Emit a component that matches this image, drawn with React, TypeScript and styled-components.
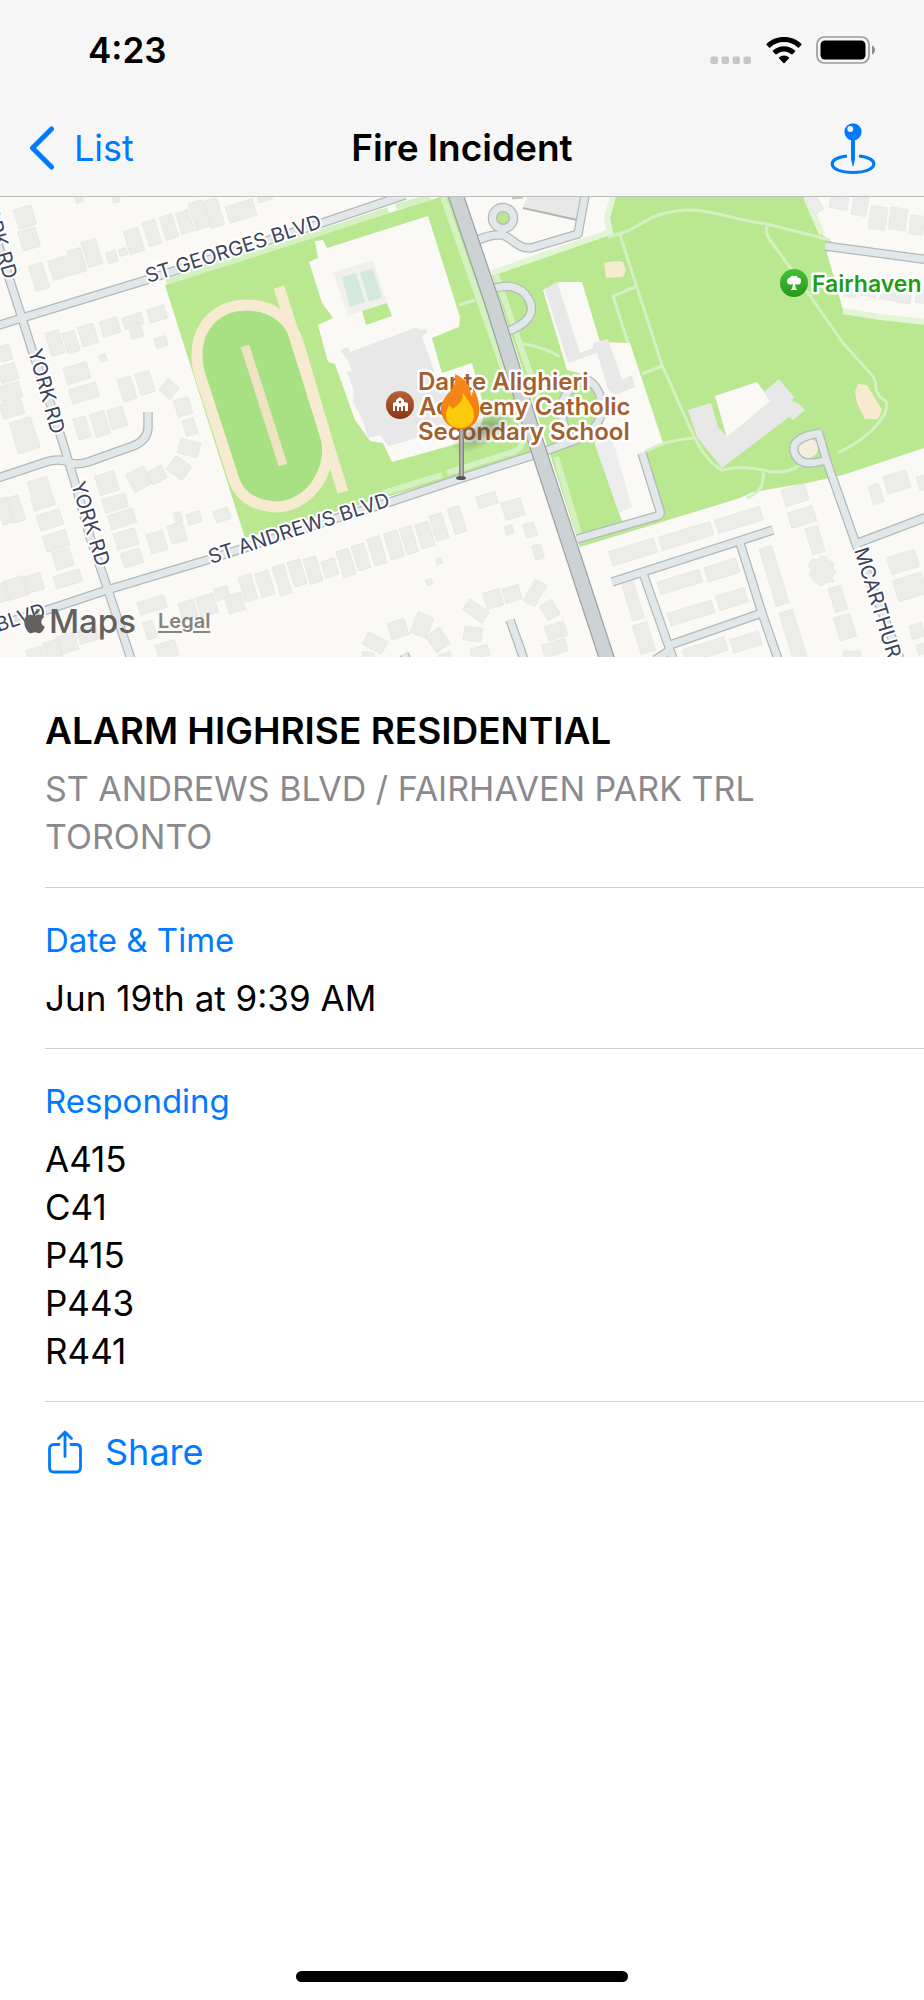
import React from 'react';
import styled, { createGlobalStyle } from 'styled-components';
import { FaApple } from 'react-icons/fa';

const GlobalStyle = createGlobalStyle`
  * { box-sizing: border-box; }
  body {
    margin: 0;
    background: #fff;
    color: #000;
    font-family: Inter, "Liberation Sans", sans-serif;
  }
`;

const BLUE = '#007aff';

const Screen = styled.div`
  display: flex;
  flex-direction: column;
  min-height: 100vh;
`;

const Header = styled.header`
  background: #f6f6f6;
  border-bottom: 1px solid #bcbebb;
`;

const StatusBar = styled.div`
  display: flex;
  align-items: center;
  justify-content: space-between;
  height: 100px;
  padding: 0 48px 0 88px;
`;

const Clock = styled.time`
  font-size: 35px;
  line-height: 48px;
  font-weight: 600;
`;

const StatusIcons = styled.div`
  display: flex;
  align-items: center;
  gap: 14px;
`;

const NavBar = styled.nav`
  display: grid;
  grid-template-columns: 1fr auto 1fr;
  align-items: center;
  height: 96px;
  padding: 0 28px;
`;

const BackButton = styled.button`
  display: flex;
  align-items: center;
  gap: 18px;
  justify-self: start;
  padding: 0;
  border: 0;
  background: none;
  color: ${BLUE};
  font: inherit;
  font-size: 36px;
  line-height: 48px;
`;

const PageTitle = styled.h1`
  margin: 0;
  font-size: 37px;
  line-height: 48px;
  font-weight: 600;
`;

const IconButton = styled.button`
  display: flex;
  justify-self: end;
  padding: 2px 20px 0 0;
  border: 0;
  background: none;
  color: ${BLUE};
`;

const MapPanel = styled.section`
  position: relative;
  overflow: hidden;
  background: #faf9f5;
`;

const MapCanvas = styled.svg`
  display: block;
  width: 100%;
  height: auto;
  font-family: Inter, "Liberation Sans", sans-serif;
`;

const Attribution = styled.div`
  position: absolute;
  left: 21px;
  bottom: 16px;
  display: flex;
  align-items: center;
  gap: 22px;
`;

const MapBrand = styled.span`
  display: flex;
  align-items: center;
  gap: 1px;
  color: #62615f;
  font-size: 33px;
  line-height: 40px;
  font-weight: 500;
`;

const AppleMark = styled(FaApple)`
  width: 27px;
  height: 28px;
`;

const LegalLink = styled.a`
  color: #858481;
  font-size: 20px;
  line-height: 24px;
  font-weight: 600;
  text-decoration: underline;
  text-underline-offset: 3px;
`;

const Details = styled.main`
  flex: 1;
  padding: 22px 0 0 45px;
`;

const Section = styled.section`
  display: flex;
  flex-direction: column;
  gap: 10px;
  padding: 28px 45px 26px 0;
  border-bottom: 1px solid #d0d0d2;
`;

const IncidentType = styled.h2`
  margin: 0;
  font-size: 37px;
  line-height: 48px;
  font-weight: 600;
`;

const Address = styled.address`
  color: #8a8a8e;
  font-size: 34px;
  line-height: 48px;
  font-style: normal;
`;

const SectionTitle = styled.h3`
  margin: 0;
  color: ${BLUE};
  font-size: 33px;
  line-height: 48px;
  font-weight: 400;
`;

const Value = styled.p`
  margin: 0;
  font-size: 35px;
  line-height: 48px;
`;

const UnitList = styled.ul`
  margin: 0;
  padding: 0;
  list-style: none;
  font-size: 35px;
  line-height: 48px;
`;

const ShareButton = styled.button`
  display: flex;
  align-items: center;
  gap: 23px;
  margin-top: 26px;
  padding: 0 0 0 3px;
  border: 0;
  background: none;
  color: ${BLUE};
  font: inherit;
  font-size: 36px;
  line-height: 48px;
`;

const HomeArea = styled.footer`
  display: flex;
  justify-content: center;
  padding: 16px 0 18px;
`;

const HomeIndicator = styled.div`
  width: 36%;
  height: 11px;
  border-radius: 6px;
  background: #000;
`;

const PAPER = '#faf9f5';
const GREEN = '#b9e890';
const FIELD = '#a8e184';
const SAND = '#f6ebd0';
const TRAIL = '#d6f1c1';
const BUILDING = '#e8e8e8';

type House = [cx: number, cy: number, w: number, h: number, angle?: number];

const houses: House[] = [
  [25, 217, 18, 20], [29, 239, 18, 20], [39, 277, 14, 26], [60, 268, 20, 20], [77, 261, 14, 24],
  [92, 253, 15, 26], [112, 257, 10, 11], [123, 252, 8, 7], [134, 241, 15, 24], [152, 233, 13, 25],
  [169, 227, 13, 24], [185, 222, 13, 22], [199, 215, 14, 28], [214, 213, 14, 28], [241, 211, 28, 17],
  [79, 199, 7, 7], [116, 199, 7, 7], [265, 198, 14, 6],
  [55, 343, 14, 24], [71, 342, 13, 21], [88, 335, 16, 20], [110, 327, 18, 16], [133, 321, 20, 12],
  [136, 331, 12, 14], [157, 314, 18, 14], [161, 342, 12, 10], [103, 358, 7, 7], [77, 373, 24, 17],
  [84, 393, 28, 15], [127, 389, 14, 23], [145, 383, 15, 22], [169, 389, 15, 15, 40], [183, 407, 15, 17],
  [5, 353, 12, 16], [8, 373, 18, 17], [10, 392, 22, 16], [12, 409, 22, 15], [22, 427, 22, 15],
  [82, 428, 13, 22], [100, 424, 15, 24], [117, 418, 16, 20], [190, 427, 12, 16],
  [27, 443, 23, 16], [39, 486, 20, 14], [43, 501, 22, 14], [50, 520, 24, 16], [5, 511, 12, 26],
  [16, 509, 12, 26], [56, 541, 24, 17], [63, 559, 18, 18], [68, 579, 27, 13], [16, 588, 20, 20],
  [34, 583, 17, 17], [1, 593, 12, 18], [107, 483, 20, 20], [115, 503, 24, 14], [122, 519, 26, 15],
  [126, 539, 22, 17], [132, 558, 20, 15], [139, 479, 20, 20, -28], [157, 475, 16, 14, -28],
  [179, 468, 20, 17, 35], [189, 448, 21, 15, 15], [157, 542, 17, 20], [177, 533, 16, 19],
  [178, 517, 7, 10], [194, 518, 14, 11], [222, 515, 15, 12], [152, 605, 28, 13], [188, 610, 16, 18],
  [207, 605, 18, 20], [222, 593, 14, 12], [235, 603, 17, 18], [248, 588, 13, 26], [265, 584, 14, 25],
  [282, 580, 12, 30], [297, 573, 13, 26], [167, 650, 20, 16], [150, 630, 10, 18], [68, 643, 18, 18],
  [52, 650, 16, 18], [35, 655, 16, 14], [88, 635, 20, 14],
  [313, 570, 13, 26], [330, 568, 14, 17], [346, 563, 13, 27], [361, 557, 13, 26], [377, 551, 13, 28],
  [394, 545, 14, 27], [409, 540, 12, 27], [425, 535, 14, 25], [439, 527, 13, 26], [457, 520, 12, 27],
  [487, 500, 20, 12], [513, 509, 20, 18], [509, 530, 8, 9], [530, 530, 11, 14], [538, 552, 9, 15],
  [439, 561, 6, 6], [429, 582, 6, 6], [375, 643, 22, 14, 28], [398, 629, 18, 17], [422, 625, 17, 22, 22],
  [438, 640, 17, 20, -35], [476, 611, 24, 13, 35], [493, 599, 17, 17], [512, 594, 17, 15],
  [535, 593, 13, 25, 30], [550, 610, 14, 17, -30], [556, 631, 20, 15], [555, 648, 24, 13],
  [473, 634, 18, 14, 8], [480, 652, 18, 11], [368, 655, 12, 6, 5], [445, 656, 12, 6],
  [815, 205, 12, 16, -30], [839, 203, 18, 12, 10], [860, 206, 15, 19, 10], [878, 218, 17, 23, 8],
  [898, 219, 17, 22, 8], [917, 225, 14, 19, 8], [850, 292, 12, 10, 8], [867, 288, 20, 16, 8],
  [888, 290, 14, 20, 8], [903, 296, 16, 14, 8], [921, 296, 10, 14, 8],
  [633, 552, 47, 15], [686, 536, 54, 14], [739, 520, 47, 14], [795, 495, 24, 17], [802, 517, 26, 16],
  [815, 540, 13, 27], [838, 599, 13, 25], [845, 627, 17, 24], [852, 655, 18, 8, 0], [876, 494, 11, 19],
  [897, 482, 24, 18], [922, 483, 8, 14], [903, 562, 29, 18], [910, 587, 30, 22], [917, 631, 13, 14],
  [922, 649, 10, 10], [680, 582, 44, 13], [722, 570, 33, 15], [691, 613, 46, 13], [732, 599, 30, 15],
  [633, 601, 12, 38], [644, 638, 15, 30], [774, 576, 13, 60], [793, 635, 14, 50], [705, 650, 44, 14],
  [746, 642, 30, 14],
];

const streets = [
  'M-10 328L22 318L143 281L322 223L405 195',
  'M-8 225L0 250L22 318L32 350L50 403L62 440L75 483L90 537L107 587L132 662',
  'M-5 479L43 463Q60 457 70 463Q78 465 88 462L133 446Q149 440 148 424L148 412',
  'M-10 628L47 610L107 590L207 560L337 518L390 502L462 478L540 453L573 441',
  'M476 241Q490 234 502 235C512 237 517 249 531 248L578 234L586 190',
  'M501 234L502 226',
  'M492 289Q505 285 513 287C526 290 533 303 531 312C528 323 517 327 507 332',
  'M573 441Q600 432 602 408Q601 388 588 380M573 441Q560 425 562 405Q565 390 578 386',
  'M577 539L657 516Q661 515 660 511L642 453',
  'M612 582L773 530',
  'M643 573L670 650L674 662',
  'M740 543L762 613L779 662',
  'M670 645L762 613M670 650L655 660',
  'M818 431L827 462L857 547L902 664',
  'M858 543L924 518L940 513',
  'M820 433C800 436 792 443 794 451C797 463 806 466 827 460',
  'M825 246L930 260',
  'M510 620L525 662',
  'M404 654L410 666',
];

const trails = [
  'M608 237L622 233C640 228 650 210 693 210C715 211 740 221 767 224L830 240',
  'M620 235L662 365L690 428Q705 462 722 470Q745 464 770 472Q790 473 800 465',
  'M763 472Q766 490 747 498',
  'M768 224Q764 232 770 240L792 270L843 343L870 373Q877 380 876 390Q880 399 886 401C890 412 875 435 838 453',
  'M635 287L613 296L628 343',
  'M662 366L642 374',
  'M645 452Q665 440 693 438',
  'M519 343Q545 347 560 357',
  'M459 305L475 300',
];

const StatusGlyphs = () => (
  <StatusIcons role="img" aria-label="No cellular signal, Wi-Fi on, battery full">
    <svg width="42" height="27" viewBox="0 0 42 27">
      {[0, 11, 22, 33].map((x) => (
        <rect key={x} x={x + 0.5} y="19.5" width="7.5" height="7.5" rx="2" fill="#c6c6c6" />
      ))}
    </svg>
    <svg width="36" height="27" viewBox="0 0 36 27">
      <path fill="#000" d="M18 0C24.900 0 31 2.600 35.300 6.700Q36 7.400 35.300 8.100L33 10.400Q32.400 11 31.700 10.400C28.200 7 23.400 5.100 18 5.100S7.800 7 4.300 10.400Q3.600 11 3 10.400L.7 8.100Q0 7.400.7 6.700C5 2.600 11.100 0 18 0Z" />
      <path fill="#000" d="M18 9.300C22.300 9.300 26.100 10.900 29 13.500Q29.600 14.100 29 14.800L26.500 17.300Q25.900 17.800 25.300 17.300C23.300 15.500 20.800 14.400 18 14.400S12.700 15.500 10.700 17.300Q10.100 17.800 9.500 17.300L7 14.800Q6.400 14.100 7 13.500C9.900 10.900 13.700 9.300 18 9.300Z" />
      <path fill="#000" d="M18 18.500Q20.800 18.500 22.800 20.200Q23.400 20.800 22.800 21.400L18.600 25.900Q18 26.500 17.400 25.900L13.200 21.400Q12.600 20.800 13.200 20.200Q15.200 18.500 18 18.500Z" />
    </svg>
    <svg width="60" height="28" viewBox="0 0 60 28">
      <rect x="1" y="1" width="52" height="26" rx="7.500" fill="none" stroke="#9b9b9b" strokeWidth="1.700" />
      <rect x="4.500" y="4.500" width="45" height="19" rx="4.500" fill="#000" />
      <path d="M56 9.500Q59 11 59 14T56 18.500Z" fill="#8c8c8c" />
    </svg>
  </StatusIcons>
);

const PinGlyph = () => (
  <svg width="46" height="52" viewBox="0 0 46 52" aria-hidden="true">
    <path d="M17 33C8 34 2.200 37 2.200 41C2.200 46 11 49.500 23 49.500S43.800 46 43.800 41C43.800 37 38 34 29 33" fill="none" stroke="currentColor" strokeWidth="3.200" />
    <path d="M21 15h4v21L23.500 43h-1L21 36Z" fill="currentColor" />
    <circle cx="23" cy="8.800" r="8.600" fill="currentColor" />
    <circle cx="20.300" cy="6" r="2.900" fill="#f6f6f6" />
  </svg>
);

const ShareGlyph = () => (
  <svg width="34" height="44" viewBox="0 0 34 44" fill="none" stroke="currentColor" strokeWidth="2.800" strokeLinecap="round" strokeLinejoin="round" aria-hidden="true">
    <path d="M11 14.500H6Q1.500 14.500 1.500 19V37.500Q1.500 42 6 42H28Q32.500 42 32.500 37.500V19Q32.500 14.500 28 14.500H23" />
    <path d="M17 26.500V2.500M10.500 8.500L17 2L23.500 8.500" />
  </svg>
);

const StreetLabel = ({ id, d, children }: { id: string; d: string; children: string }) => (
  <>
    <path id={id} d={d} fill="none" />
    <text fontSize="20" fontWeight="400" fill="#3c4259" stroke="#fff" strokeWidth="4" strokeLinejoin="round" paintOrder="stroke">
      <textPath href={`#${id}`}>{children}</textPath>
    </text>
  </>
);

const IncidentMap = () => (
  <MapCanvas viewBox="0 197 924 460" role="img" aria-label="Map of St Andrews Blvd with a fire marker">
    <defs>
      <linearGradient id="school" x1="0" y1="0" x2="0" y2="1">
        <stop offset="0" stopColor="#b5633a" />
        <stop offset="1" stopColor="#8c3518" />
      </linearGradient>
      <linearGradient id="park" x1="0" y1="0" x2="0" y2="1">
        <stop offset="0" stopColor="#46bf38" />
        <stop offset="1" stopColor="#26991c" />
      </linearGradient>
      <linearGradient id="flame" x1="0" y1="0" x2="0" y2="1">
        <stop offset="0" stopColor="#f58a1c" />
        <stop offset="1" stopColor="#f57c0c" />
      </linearGradient>
      <linearGradient id="stem" x1="0" y1="0" x2="1" y2="0">
        <stop offset="0" stopColor="#777" />
        <stop offset="0.500" stopColor="#bdbdbd" />
        <stop offset="1" stopColor="#777" />
      </linearGradient>
      <radialGradient id="shade">
        <stop offset="0" stopColor="#3b4a2c" stopOpacity="0.500" />
        <stop offset="1" stopColor="#3b4a2c" stopOpacity="0" />
      </radialGradient>
    </defs>
    <rect x="0" y="197" width="924" height="460" fill={PAPER} />

    <g fill={GREEN}>
      <path d="M165 285L310 238L440 197H456L541 452L245 538Z" />
      <path d="M492 275L610 233L608 220L615 197H805L820 233L832 242L827 253L843 310L924 322V448L843 475L807 483L753 492L740 498L580 547Z" />
      <circle cx="503" cy="218" r="9" />
    </g>
    <g fill="none" stroke="#e3f5d6" strokeWidth="6">
      <path d="M492 273L610 232L607 218L613 197" />
      <path d="M843 311L880 317L926 322M806 197L822 234" />
    </g>
    <g fill="none" stroke={TRAIL} strokeWidth="6">
      <path d="M166 282L310 236L388 210M396 207L430 197" />
      <path d="M443 197L509 385M383 493L442 475M447 473L513 452Q524 448 523 437L519 410" />
      <path d="M496 275L541 405M556 457L580 537" />
    </g>

    <path d="M197 355C197 325 218 305 247 305C275 305 291 322 298 342L326 437C334 470 310 506 277 507C255 506 240 497 234 480L201 378Q197 368 197 355Z" fill={FIELD} stroke={SAND} strokeWidth="11" />
    <path d="M279 287L343 492" stroke={SAND} strokeWidth="11" />
    <path d="M245 346L283 465" stroke="#efe3c4" strokeWidth="9" />

    <path fill={PAPER} d="M315 241L323 240L327 248L428 216L460 317L459 327L432 338L442 373L472 363L485 410L478 438L392 462L383 443L370 441L355 420L335 364L328 362L318 325L333 318L322 303L309 262L318 258Z" />
    <path fill={BUILDING} d="M340 350L348 347L350 352L417 327L420 330L427 329L427 333L422 336L441 392L472 384L482 416L400 443L388 446L380 435L368 438L363 421L353 402L354 390L347 372L352 371L348 360Z" />
    <path fill="#f1f1ec" d="M333 272L373 260L387 303L348 316Z" />
    <path fill="#d3e9dd" d="M342 277L356 273L365 302L350 307ZM360 272L373 269L382 297L369 302Z" />
    <path fill={GREEN} d="M362 311L387 303L392 316L366 325Z" />

    <path fill={PAPER} d="M543 290L560 282H582L600 342L630 343L663 443L645 453L660 515L622 521L595 444L604 412L590 376L567 370Z" />
    <path fill={BUILDING} d="M545 290L557 281L580 353L593 348V343L608 339L622 380L632 375L635 387L615 395L608 390L597 353L568 363Z" />
    <path fill="#eeedee" d="M595 445L612 438L632 507L619 513Z" />
    <path fill={PAPER} d="M715 396L757 382L771 401L727 438Z" />
    <path fill={BUILDING} d="M688 410L711 403L718 427L727 437L770 401L764 392L779 379L794 397L792 401L798 403L805 410L793 420L789 417L722 468L697 437Z" />
    <path fill={BUILDING} d="M527 197L523 207L577 220L583 197Z" />
    <path d="M523 208L577 220" stroke="#b4b4b4" strokeWidth="2" />
    <path d="M512 198L523 197" stroke="#c5c5c5" strokeWidth="3" />

    <g fill="#ececeb" stroke="#e0e0df" strokeWidth="0.500">
      {houses.map(([cx, cy, w, h, angle = -17]) => (
        <rect key={`${cx}-${cy}`} x={cx - w / 2} y={cy - h / 2} width={w} height={h} transform={`rotate(${angle} ${cx} ${cy})`} />
      ))}
      <path d="M812 559L818 560L821 556L827 557L829 561L834 563L833 568L836 573L832 577L834 582L827 582L822 586L817 584L812 579L809 574L812 570L808 566Z" />
    </g>

    <g fill={SAND}>
      <path d="M604 263Q614 260 623 262L626 270L623 277L606 278Z" />
      <path d="M858 384L867 385L882 410L878 419L865 419L857 403L855 392Z" />
    </g>
    <circle cx="808" cy="448" r="10" fill="#f5eee0" />
    <g fill="none" stroke={TRAIL} strokeWidth="3">
      {trails.map((d) => <path key={d} d={d} />)}
    </g>

    <g fill="none" stroke="#b3b9ba" strokeWidth="9.500" strokeLinejoin="round">
      {streets.map((d) => <path key={d} d={d} />)}
      <circle cx="503" cy="218" r="10.500" />
    </g>
    <g fill="none" stroke="#e2e8e9" strokeWidth="7" strokeLinejoin="round">
      {streets.map((d) => <path key={d} d={d} />)}
      <circle cx="503" cy="218" r="10.500" />
    </g>
    <path d="M454 190L492 302L530 424L608 662" fill="none" stroke="#9ca2a3" strokeWidth="16" />
    <path d="M454 190L492 302L530 424L608 662" fill="none" stroke="#cdd3d4" strokeWidth="13.500" />

    <StreetLabel id="georges" d="M148 283L235 256L334 224">ST GEORGES BLVD</StreetLabel>
    <StreetLabel id="andrews" d="M211 564L300 535L400 503">ST ANDREWS BLVD</StreetLabel>
    <StreetLabel id="york-a" d="M28 351L56 450">YORK RD</StreetLabel>
    <StreetLabel id="york-b" d="M71 484L102 584">YORK RD</StreetLabel>
    <StreetLabel id="york-c" d="M-20 196L9 297">YORK RD</StreetLabel>
    <StreetLabel id="mcarthur" d="M854 550L896 685">MCARTHUR</StreetLabel>
    <StreetLabel id="blvd" d="M-2 632L64 611">BLVD</StreetLabel>

    <circle cx="400" cy="405" r="14" fill="url(#school)" />
    <g fill="#fff">
      <path d="M393 411V403L396 402V400L400 397L404 400V402L408 403V411H405V406H403V411H401V407H399V411H397V406H395V411Z" />
      <circle cx="400" cy="402" r="1.300" fill="#a04f2b" />
    </g>
    <circle cx="794" cy="283" r="14" fill="url(#park)" />
    <path fill="#fff" d="M793 284Q787 286 787 281Q788 277 790 278Q791 275 794 276Q797 275 798 278Q801 277 801 281Q801 286 795 284L796 289H797V290H791V289H792Z" />

    <g fontWeight="600" stroke="#fff" strokeWidth="5" strokeLinejoin="round" paintOrder="stroke">
      <g fill="#a4602f" fontSize="24">
        <text x="418" y="390">Dante Alighieri</text>
        <text x="419" y="415">Academy Catholic</text>
        <text x="418" y="440">Secondary School</text>
      </g>
      <text x="812" y="292" fill="#1f9d13" fontSize="23">Fairhaven</text>
    </g>

    <ellipse cx="482" cy="432" rx="34" ry="14" fill="url(#shade)" transform="rotate(-30 482 432)" />
    <rect x="459" y="425" width="5" height="53" fill="url(#stem)" />
    <ellipse cx="461" cy="478" rx="5" ry="2" fill="#555" />
    <path fill="url(#flame)" d="M455 374C469 380 471 390 471 396C473 393 473 391 473 388C479 398 480 407 479 414C477 424 470 429 461 429C450 429 442 421 441 411C440 402 446 396 451 390C455 385 456 380 455 374Z" />
    <path fill="#fecb0c" d="M463 393C467 400 474 406 474 415C474 423 468 428 460 428C452 428 446 423 446 416C446 411 448 408 449 405C451 407 452 408 453 409C457 405 463 402 463 393Z" />
  </MapCanvas>
);

const units = ['A415', 'C41', 'P415', 'P443', 'R441'];

export default function App() {
  return (
    <Screen>
      <GlobalStyle />
      <Header>
        <StatusBar>
          <Clock>4:23</Clock>
          <StatusGlyphs />
        </StatusBar>
        <NavBar>
          <BackButton type="button">
            <svg width="28" height="44" viewBox="0 0 28 44" fill="none" stroke="currentColor" strokeWidth="5" strokeLinecap="round" strokeLinejoin="round" aria-hidden="true">
              <path d="M23.500 3L4.500 22L23.500 41" />
            </svg>
            List
          </BackButton>
          <PageTitle>Fire Incident</PageTitle>
          <IconButton type="button" aria-label="Show location">
            <PinGlyph />
          </IconButton>
        </NavBar>
      </Header>
      <MapPanel>
        <IncidentMap />
        <Attribution>
          <MapBrand>
            <AppleMark aria-hidden="true" />
            Maps
          </MapBrand>
          <LegalLink href="#legal">Legal</LegalLink>
        </Attribution>
      </MapPanel>
      <Details>
        <Section>
          <IncidentType>ALARM HIGHRISE RESIDENTIAL</IncidentType>
          <Address>
            ST ANDREWS BLVD / FAIRHAVEN PARK TRL
            <br />
            TORONTO
          </Address>
        </Section>
        <Section>
          <SectionTitle>Date &amp; Time</SectionTitle>
          <Value>Jun 19th at 9:39 AM</Value>
        </Section>
        <Section>
          <SectionTitle>Responding</SectionTitle>
          <UnitList>
            {units.map((unit) => <li key={unit}>{unit}</li>)}
          </UnitList>
        </Section>
        <ShareButton type="button">
          <ShareGlyph />
          Share
        </ShareButton>
      </Details>
      <HomeArea>
        <HomeIndicator />
      </HomeArea>
    </Screen>
  );
}
